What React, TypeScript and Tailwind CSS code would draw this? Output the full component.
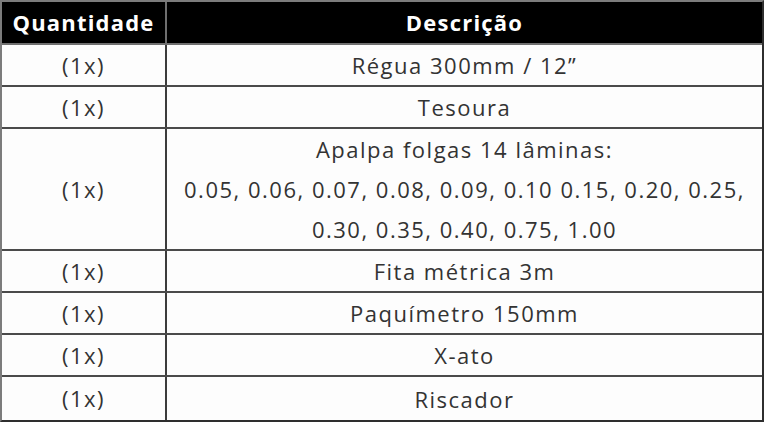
import React from "react";

const rows: { q: string; d: string[] }[] = [
  { q: "(1x)", d: ["Régua 300mm / 12”"] },
  { q: "(1x)", d: ["Tesoura"] },
  {
    q: "(1x)",
    d: [
      "Apalpa folgas 14 lâminas:",
      "0.05, 0.06, 0.07, 0.08, 0.09, 0.10 0.15, 0.20, 0.25,",
      "0.30, 0.35, 0.40, 0.75, 1.00",
    ],
  },
  { q: "(1x)", d: ["Fita métrica 3m"] },
  { q: "(1x)", d: ["Paquímetro 150mm"] },
  { q: "(1x)", d: ["X-ato"] },
  { q: "(1x)", d: ["Riscador"] },
];

export default function App() {
  return (
    <div
      className="w-[764px] h-[422px] bg-[#fdfdfd] border-2 border-t-[#7c7c7c] border-l-[#7c7c7c] border-r-[#2e2e2e] border-b-[#2e2e2e] flex flex-col overflow-hidden"
      style={{ fontFamily: '"Open Sans", sans-serif' }}
    >
      <div className="flex h-[43px] bg-black text-white font-bold text-[22px] tracking-[1.2px] border-b-2 border-[#6f6f6f] shrink-0">
        <div className="w-[165px] border-r-2 border-[#6f6f6f] flex items-center justify-center">
          Quantidade
        </div>
        <div className="flex-1 flex items-center justify-center">Descrição</div>
      </div>
      {rows.map((r, i) => (
        <div
          key={i}
          className={`flex text-[22px] tracking-[1.5px] text-[#333333] ${
            i < rows.length - 1 ? "border-b-2 border-[#4a4a4a] shrink-0" : "flex-1"
          }`}
        >
          <div className="w-[165px] border-r-2 border-[#3c3c3c] flex items-center justify-center">
            {r.q}
          </div>
          <div className="flex-1 flex flex-col items-center justify-center">
            {r.d.map((line, j) => (
              <div key={j} className="h-[40px] leading-[40px] whitespace-nowrap">
                {line}
              </div>
            ))}
          </div>
        </div>
      ))}
    </div>
  );
}
